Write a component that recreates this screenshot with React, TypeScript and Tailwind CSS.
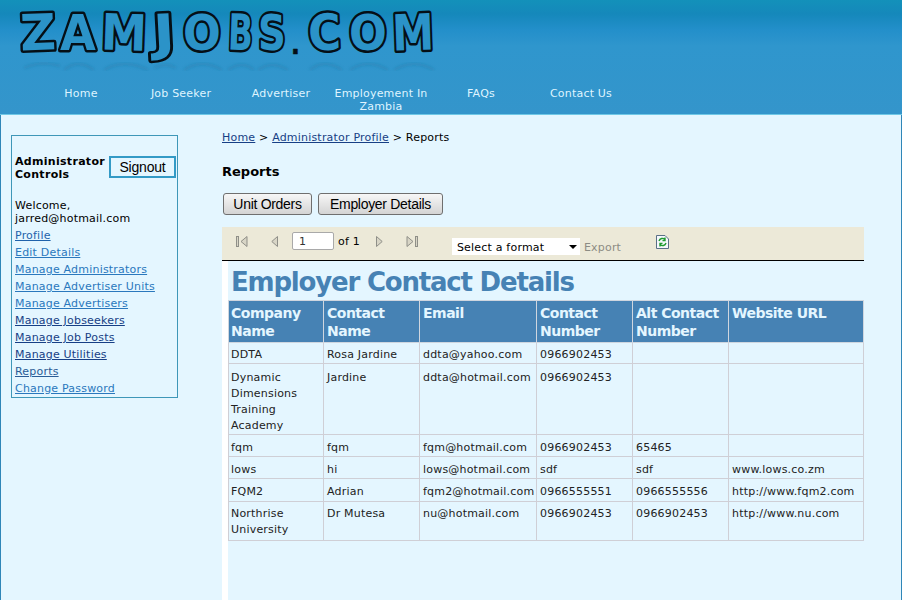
const navItems = ["Home", "Job Seeker", "Advertiser", "Employement In Zambia", "FAQs", "Contact Us"];

const sideLinks = [
  { label: "Profile", color: "text-[#1f62ab]" },
  { label: "Edit Details", color: "text-[#2a78bd]" },
  { label: "Manage Administrators", color: "text-[#2a78bd]" },
  { label: "Manage Advertiser Units", color: "text-[#2a78bd]" },
  { label: "Manage Advertisers", color: "text-[#2a78bd]" },
  { label: "Manage Jobseekers", color: "text-[#173f85]" },
  { label: "Manage Job Posts", color: "text-[#173f85]" },
  { label: "Manage Utilities", color: "text-[#173f85]" },
  { label: "Reports", color: "text-[#2a5c96]" },
  { label: "Change Password", color: "text-[#2a78bd]" },
];

const rows = [
  { cells: ["DDTA", "Rosa Jardine", "ddta@yahoo.com", "0966902453", "", ""], h: "h-[21px]", pad: "pt-[4px]" },
  { cells: ["Dynamic Dimensions Training Academy", "Jardine", "ddta@hotmail.com", "0966902453", "", ""], h: "h-[71px]", pad: "pt-[6px]" },
  { cells: ["fqm", "fqm", "fqm@hotmail.com", "0966902453", "65465", ""], h: "h-[22px]", pad: "pt-[5px]" },
  { cells: ["lows", "hi", "lows@hotmail.com", "sdf", "sdf", "www.lows.co.zm"], h: "h-[22px]", pad: "pt-[5px]" },
  { cells: ["FQM2", "Adrian", "fqm2@hotmail.com", "0966555551", "0966555556", "http://www.fqm2.com"], h: "h-[23px]", pad: "pt-[5px]" },
  { cells: ["Northrise University", "Dr Mutesa", "nu@hotmail.com", "0966902453", "0966902453", "http://www.nu.com"], h: "h-[39px]", pad: "pt-[4px]" },
];

const headers = ["Company Name", "Contact Name", "Email", "Contact Number", "Alt Contact Number", "Website URL"];
const colWidths = ["w-[95px]", "w-[96px]", "w-[117px]", "w-[96px]", "w-[96px]", "w-[135px]"];

const logoLetters = [
  { ch: "Z", x: 20, w: 36, r: -2 },
  { ch: "A", x: 60, w: 36, r: 0 },
  { ch: "M", x: 101, w: 46, r: 2 },
  { ch: "J", x: 153, w: 22, r: -3 },
  { ch: "O", x: 183, w: 38, r: 0 },
  { ch: "B", x: 228, w: 25, r: 2 },
  { ch: "S", x: 258, w: 28, r: 0 },
  { ch: ".", x: 291, w: 9, r: 0 },
  { ch: "C", x: 308, w: 33, r: -2 },
  { ch: "O", x: 349, w: 38, r: 0 },
  { ch: "M", x: 392, w: 42, r: -2 },
];

function Logo() {
  return (
    <svg width="480" height="76" viewBox="0 0 480 76" className="block" aria-label="ZAMJOBS.COM">
      <defs>
        <filter id="soft">
          <feGaussianBlur stdDeviation="1.4" />
        </filter>
      </defs>
      {logoLetters.map((l, i) => (
        <text
          key={i}
          x={l.x}
          y={l.ch === "." ? 50 : 46}
          textLength={l.w}
          lengthAdjust="spacingAndGlyphs"
          transform={`rotate(${l.r} ${l.x + l.w / 2} 28)`}
          fontFamily="'DejaVu Sans', sans-serif"
          fontWeight="700"
          fontSize={l.ch === "." ? 26 : 50}
          fill={l.ch === "." ? "#050f16" : "#2b93c8"}
          stroke="#050f16"
          strokeWidth={l.ch === "." ? 0.6 : 5}
          strokeLinejoin="round"
          paintOrder="stroke"
        >
          {l.ch}
        </text>
      ))}
      {/* faint reflection below the logo */}
      <g filter="url(#soft)" fill="none" stroke="#1b6a96" strokeOpacity="0.28" strokeWidth="3">
        <path d="M24 64 q18 -8 36 -2 M64 66 q14 -12 30 0 M104 66 q20 -12 44 0 M154 64 q12 -6 22 0 M184 66 q18 -12 38 0 M228 66 q14 -10 26 0 M258 66 q14 -10 30 0 M310 66 q14 -12 32 0 M350 66 q18 -12 38 0 M394 66 q20 -12 40 0" />
      </g>
    </svg>
  );
}

function FirstIcon({ flip = false }: { flip?: boolean }) {
  return (
    <svg width="12" height="11" viewBox="0 0 12 11" className={flip ? "-scale-x-100" : ""}>
      <rect x="0.5" y="0.5" width="2" height="10" fill="#d8d5c6" stroke="#8f8f88" />
      <path d="M11 0.5 L5 5.5 L11 10.5 Z" fill="#d8d5c6" stroke="#8f8f88" />
    </svg>
  );
}

function PrevIcon({ flip = false }: { flip?: boolean }) {
  return (
    <svg width="7" height="11" viewBox="0 0 7 11" className={flip ? "-scale-x-100" : ""}>
      <path d="M6.5 0.5 L0.8 5.5 L6.5 10.5 Z" fill="#d8d5c6" stroke="#8f8f88" />
    </svg>
  );
}

function RefreshIcon() {
  return (
    <svg width="13" height="14" viewBox="0 0 13 14" className="block">
      <path d="M0.5 0.5 H9 L12.5 4 V13.5 H0.5 Z" fill="#f4f8fb" stroke="#5a6f86" />
      <path d="M3 6 A3.6 3.6 0 0 1 9 4.5 M9 2.5 V5.5 H6.5" fill="none" stroke="#1f9b2f" strokeWidth="1.4" />
      <path d="M10 8 A3.6 3.6 0 0 1 4 9.5 M4 11.5 V8.5 H6.5" fill="none" stroke="#1f9b2f" strokeWidth="1.4" />
    </svg>
  );
}

function ReportButton({ children, width }: { children: string; width: string }) {
  return (
    <button className={`${width} h-[22px] rounded-[3px] border border-[#6f6f6f] bg-gradient-to-b from-[#f7f7f7] to-[#d4d4d4] font-['Liberation_Sans',sans-serif] text-[14px] leading-none tracking-[-0.3px] text-black`}>
      {children}
    </button>
  );
}

export default function App() {
  return (
    <div className="flex h-[600px] w-[902px] flex-col overflow-hidden bg-[#e4f6ff] font-['DejaVu_Sans',sans-serif] text-[11px] leading-[13px] tracking-[0.2px] text-black">
      <header className="h-[115px] shrink-0 border-b border-[#6fc8e6] bg-[linear-gradient(to_bottom,#1391ba_0px,#1588bb_14px,#238fca_30px,#2f96cd_46px,#3495cb_115px)]">
        <div className="h-[80px] overflow-hidden pt-[4px]">
          <Logo />
        </div>
        <nav className="ml-[31px] flex pt-[7px] text-[#dff4ff]">
          {navItems.map((item) => (
            <a key={item} className="w-[100px] text-center">
              {item}
            </a>
          ))}
        </nav>
      </header>

      <main className="flex min-h-0 flex-1 border-x border-[#2f86b8]">
        <aside className="ml-[10px] mt-[20px] h-[263px] w-[167px] shrink-0 border border-[#3e97b8] pl-[3px] pr-[1px]">
          <div className="mt-[19px] flex items-center justify-between">
            <b className="w-[93px] tracking-[0.3px]">Administrator Controls</b>
            <button className="mb-[2px] h-[22px] w-[67px] border-2 border-[#339ac6] bg-[#e4f6ff] font-['Liberation_Sans',sans-serif] text-[14px] leading-none tracking-[-0.2px] text-black">
              Signout
            </button>
          </div>
          <p className="mt-[18px]">Welcome, jarred@hotmail.com</p>
          <ul className="mt-[4px] flex flex-col gap-[4px]">
            {sideLinks.map((link) => (
              <li key={link.label}>
                <a className={`underline ${link.color}`}>{link.label}</a>
              </li>
            ))}
          </ul>
        </aside>

        <section className="ml-[44px] flex w-[642px] flex-col">
          <p className="mt-[16px]">
            <a className="text-[#173f85] underline">Home</a> &gt;{" "}
            <a className="text-[#173f85] underline">Administrator Profile</a> &gt; Reports
          </p>
          <h2 className="mt-[20px] text-[13px] font-bold leading-[16px] tracking-normal">Reports</h2>
          <div className="ml-px mt-[13px] flex gap-[6px]">
            <ReportButton width="w-[89px]">Unit Orders</ReportButton>
            <ReportButton width="w-[125px]">Employer Details</ReportButton>
          </div>

          <div className="mt-[12px] flex h-[34px] shrink-0 border-b border-black bg-[#ece9d8] text-[11px]">
            <div className="ml-[14px] mt-[9px] flex h-[11px] items-center">
              <FirstIcon />
              <span className="ml-[23px] flex"><PrevIcon /></span>
            </div>
            <input
              readOnly
              value="1"
              className="ml-[14px] mt-[5px] h-[18px] w-[42px] rounded-[2px] border border-[#a9a9a9] bg-white pl-[6px] text-[11px] text-[#333]"
            />
            <span className="ml-[4px] mt-[8px]">of 1</span>
            <div className="ml-[16px] mt-[9px] flex h-[11px] items-center">
              <PrevIcon flip />
              <span className="ml-[23px] flex"><FirstIcon flip /></span>
            </div>
            <div className="ml-[34px] mt-[11px] flex h-[17px] w-[128px] items-center justify-between bg-white pl-[5px] pr-[3px] pt-px">
              <span>Select a format</span>
              <svg width="8" height="4" viewBox="0 0 8 4"><path d="M0 0 H8 L4 4 Z" fill="#000" /></svg>
            </div>
            <span className="ml-[4px] mt-[14px] text-[#8c8c84]">Export</span>
            <span className="ml-[35px] mt-[8px]"><RefreshIcon /></span>
          </div>

          <div className="flex-1 border-l-[6px] border-white">
            <h1 className="h-[39px] pl-[3px] text-[26px] font-bold leading-[43px] tracking-[-1.2px] text-[#4682b4]">
              Employer Contact Details
            </h1>
            <table className="w-[635px] table-fixed border-collapse">
              <thead>
                <tr className="h-[42px] bg-[#4682b4] text-[#e4f6ff]">
                  {headers.map((header, i) => (
                    <th
                      key={header}
                      className={`${colWidths[i]} border border-[#cfd6df] pl-[3px] first:pl-[2px] pt-[3px] text-left align-top text-[14px] font-bold leading-[18px] tracking-[-0.5px]`}
                    >
                      {header}
                    </th>
                  ))}
                </tr>
              </thead>
              <tbody>
                {rows.map((row) => (
                  <tr key={row.cells[2]} className={row.h}>
                    {row.cells.map((cell, i) => (
                      <td key={i} className={`${row.pad} border border-[#cfcfd6] pl-[3px] first:pl-[2px] align-top text-[11px] leading-[16px] text-[#222]`}>
                        {cell}
                      </td>
                    ))}
                  </tr>
                ))}
              </tbody>
            </table>
          </div>
        </section>
      </main>
    </div>
  );
}
